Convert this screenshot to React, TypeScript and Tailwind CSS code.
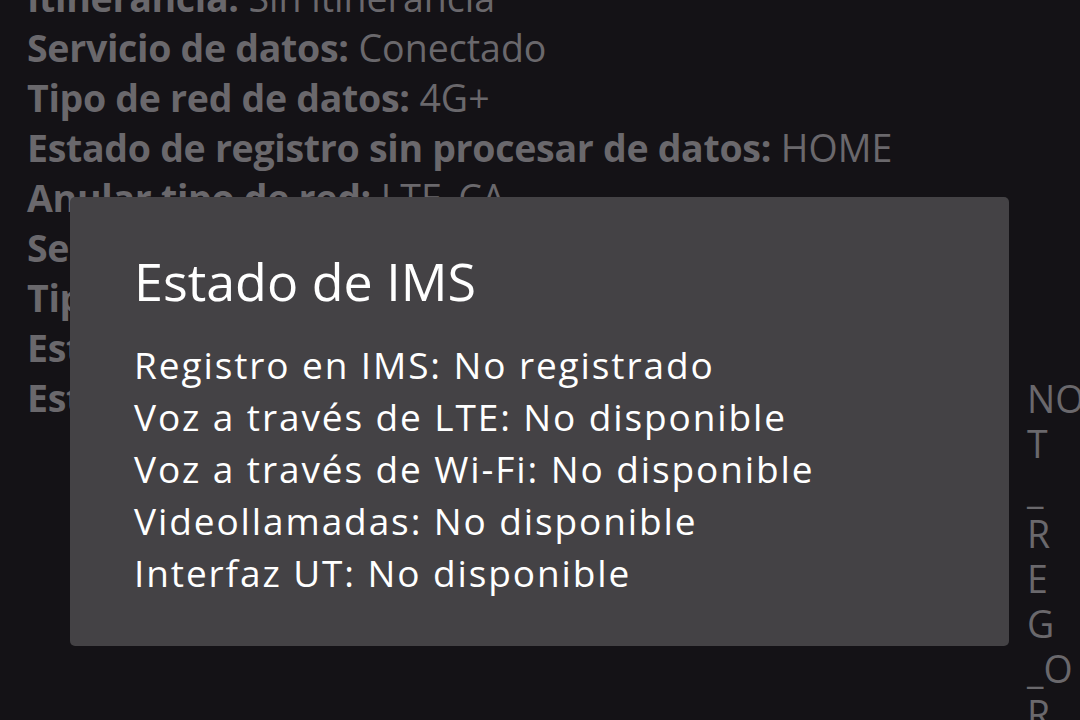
import React from "react";

const bgLines: { label: string; value: string }[] = [
  { label: "Itinerancia:", value: "Sin itinerancia" },
  { label: "Servicio de datos:", value: "Conectado" },
  { label: "Tipo de red de datos:", value: "4G+" },
  { label: "Estado de registro sin procesar de datos:", value: "HOME" },
  { label: "Anular tipo de red:", value: "LTE_CA" },
  { label: "Servicio de voz:", value: "En servicio" },
  { label: "Tipo de red de voz:", value: "LTE" },
  { label: "Estado de registro sin procesar de voz:", value: "HOME" },
];

const wrapped = ["NO", "T", "_", "R", "E", "G", "_O", "R"];

const imsLines = [
  "Registro en IMS: No registrado",
  "Voz a través de LTE: No disponible",
  "Voz a través de Wi-Fi: No disponible",
  "Videollamadas: No disponible",
  "Interfaz UT: No disponible",
];

export default function App() {
  return (
    <div
      className="relative w-[1080px] h-[720px] overflow-hidden bg-[#141216]"
      style={{ fontFamily: "'Open Sans', 'Noto Sans', sans-serif" }}
    >
      <div className="mt-[-27px] pl-[27px] text-[#6a686c] text-[37.5px] leading-[50px]">
        {bgLines.map((l, i) => (
          <div key={i} className="h-[50px] whitespace-nowrap">
            <span className="font-bold tracking-[-0.3px]">{l.label}</span>{" "}
            <span>{l.value}</span>
          </div>
        ))}
        <div className="flex items-start whitespace-nowrap">
          <span className="font-bold tracking-[-0.3px] h-[50px] w-[1000px] shrink-0">
            Estado de registro sin procesar de datos de WLAN:
          </span>
          <div className="flex flex-col mt-[3px]">
            {wrapped.map((c, i) => (
              <span key={i} className="leading-[45px]">
                {c}
              </span>
            ))}
          </div>
        </div>
      </div>

      <div className="absolute left-[70px] top-[197px] w-[939px] h-[449px] rounded-[5px] bg-[#444245] pl-[64px] pt-[52px] text-white">
        <div className="text-[52px] leading-[64px]">Estado de IMS</div>
        <div className="mt-[26px] text-[37px] tracking-[1.9px]">
          {imsLines.map((t, i) => (
            <div key={i} className="leading-[52px] whitespace-nowrap">
              {t}
            </div>
          ))}
        </div>
      </div>
    </div>
  );
}
